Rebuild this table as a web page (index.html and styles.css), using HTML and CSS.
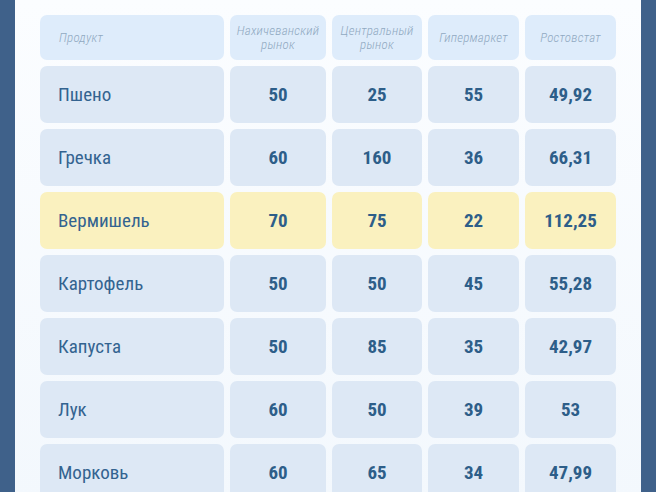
FILE: index.html
```html
<!DOCTYPE html>
<html lang="ru">
<head>
<meta charset="utf-8">
<title>Цены</title>
<link rel="stylesheet" href="styles.css">
</head>
<body>
<main class="panel">
  <div class="table">
    <div class="cell head name">Продукт</div>
    <div class="cell head"><span>Нахичеванский</span><span>рынок</span></div>
    <div class="cell head"><span>Центральный</span><span>рынок</span></div>
    <div class="cell head">Гипермаркет</div>
    <div class="cell head">Ростовстат</div>

    <div class="cell name">Пшено</div>
    <div class="cell num">50</div>
    <div class="cell num">25</div>
    <div class="cell num">55</div>
    <div class="cell num">49,92</div>

    <div class="cell name">Гречка</div>
    <div class="cell num">60</div>
    <div class="cell num">160</div>
    <div class="cell num">36</div>
    <div class="cell num">66,31</div>

    <div class="cell name hl">Вермишель</div>
    <div class="cell num hl">70</div>
    <div class="cell num hl">75</div>
    <div class="cell num hl">22</div>
    <div class="cell num hl">112,25</div>

    <div class="cell name">Картофель</div>
    <div class="cell num">50</div>
    <div class="cell num">50</div>
    <div class="cell num">45</div>
    <div class="cell num">55,28</div>

    <div class="cell name">Капуста</div>
    <div class="cell num">50</div>
    <div class="cell num">85</div>
    <div class="cell num">35</div>
    <div class="cell num">42,97</div>

    <div class="cell name">Лук</div>
    <div class="cell num">60</div>
    <div class="cell num">50</div>
    <div class="cell num">39</div>
    <div class="cell num">53</div>

    <div class="cell name">Морковь</div>
    <div class="cell num">60</div>
    <div class="cell num">65</div>
    <div class="cell num">34</div>
    <div class="cell num">47,99</div>
  </div>
</main>
</body>
</html>
```
FILE: styles.css
```css
html, body {
  margin: 0;
  padding: 0;
  height: 100%;
  overflow: hidden;
}
body {
  background: #3f618a;
  font-family: "Roboto", "Liberation Sans", sans-serif;
  font-stretch: condensed;
}
.panel {
  margin: 0 15px;
  min-height: 100%;
  background: linear-gradient(180deg, #fbfdff 0%, #f3f8fd 100%);
  padding: 15px 25px 0 25px;
  box-sizing: border-box;
}
.table {
  display: grid;
  grid-template-columns: 184px 96px 90px 91px 91px;
  grid-template-rows: 45px;
  grid-auto-rows: 57px;
  gap: 6px;
}
.cell {
  background: #dde8f5;
  border-radius: 7px;
  display: flex;
  align-items: center;
  justify-content: center;
  text-align: center;
  color: #2d5e89;
}
.cell.name {
  justify-content: flex-start;
  padding-left: 18px;
  font-size: 19px;
  color: #336390;
}
.cell.num {
  font-weight: 700;
  font-size: 19px;
}
.cell.head {
  background: #deecfb;
  font-style: italic;
  font-weight: 300;
  font-size: 13px;
  letter-spacing: 0.25px;
  line-height: 14px;
  color: #90a9c1;
  flex-direction: column;
}
.cell.head span {
  display: block;
  height: 14px;
}
.cell.head.name {
  justify-content: center;
  align-items: flex-start;
  padding-left: 19px;
}
.cell.hl {
  background: #faf1bf;
}
```
